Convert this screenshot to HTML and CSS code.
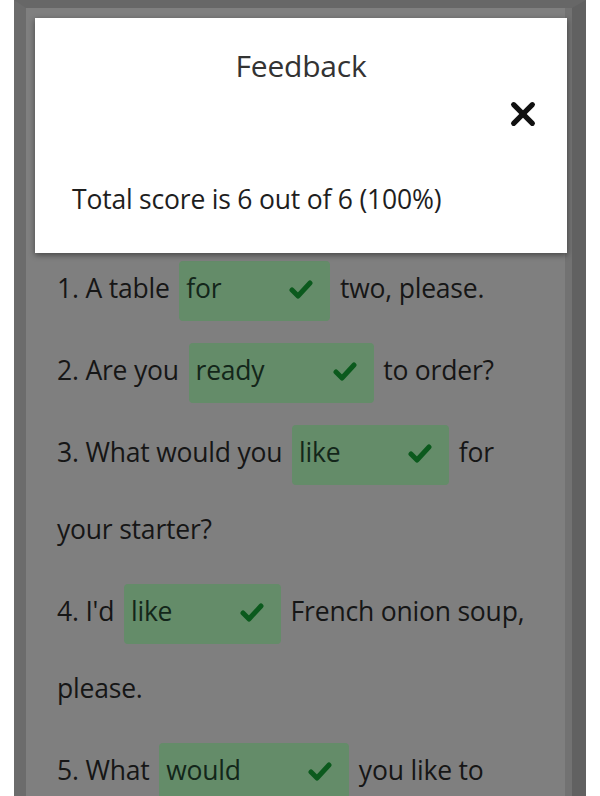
FILE: index.html
```html
<!DOCTYPE html>
<html lang="en">
<head>
    <meta charset="UTF-8">
    <meta name="viewport" content="width=device-width, initial-scale=1.0">
    <title>Restaurant Phrases</title>
    <link rel="stylesheet" href="styles.css">
</head>
<body>
    <div class="frame">
        <div class="quiz">
            <p class="item">1. A table
                <span class="answer w-for">for <svg class="tick" viewBox="0 0 24 20"><polyline points="3,10 9,16 21,3"/></svg></span>
                two, please.</p>
            <p class="item">2. Are you
                <span class="answer w-ready">ready <svg class="tick" viewBox="0 0 24 20"><polyline points="3,10 9,16 21,3"/></svg></span>
                to order?</p>
            <p class="item">3. What would you
                <span class="answer w-like">like <svg class="tick" viewBox="0 0 24 20"><polyline points="3,10 9,16 21,3"/></svg></span>
                for your starter?</p>
            <p class="item">4. I'd
                <span class="answer w-like">like <svg class="tick" viewBox="0 0 24 20"><polyline points="3,10 9,16 21,3"/></svg></span>
                French onion soup, please.</p>
            <p class="item">5. What
                <span class="answer w-would">would <svg class="tick" viewBox="0 0 24 20"><polyline points="3,10 9,16 21,3"/></svg></span>
                you like to have for your main course?</p>
        </div>

        <!-- feedback popup lies over the dimmed quiz -->
        <div class="modal">
            <h2 class="modal-title">Feedback</h2>
            <button class="close" type="button" aria-label="Close">
                <svg viewBox="0 0 24 24"><line x1="4" y1="4" x2="20" y2="20"/><line x1="20" y1="4" x2="4" y2="20"/></svg>
            </button>
            <p class="score">Total score is 6 out of 6 (100%)</p>
        </div>
    </div>
</body>
</html>
```

FILE: styles.css
```css
body {
    margin: 0;
    background-color: #fff;
    font-family: "Open Sans", "Noto Sans", sans-serif;
    overflow: hidden;
}

.frame {
    position: relative;
    margin: 0 14px;
    height: 788px;
    overflow: hidden;
    background-color: #7f7f7f;
    border-top: 8px solid #676767;
    border-left: 12px solid #6c6c6c;
    border-right: 14px solid #616161;
    box-shadow: inset -7px 0 0 #727272;
}

.quiz {
    padding: 242px 40px 0 31px;
    font-size: 26.5px;
    letter-spacing: -0.2px;
    color: #161616;
}

.item {
    margin: 0 0 5px;
    line-height: 77px;
}

.answer {
    display: inline-flex;
    align-items: center;
    justify-content: space-between;
    box-sizing: border-box;
    height: 60px;
    margin: 0 3px;
    padding: 0 17px 6px 7px;
    vertical-align: middle;
    background-color: #648c69;
    border-radius: 4px;
    color: #13261a;
    line-height: 1;
}

.w-for { width: 151px; }
.w-ready { width: 185px; }
.w-like { width: 157px; }
.w-would { width: 190px; }

.tick {
    width: 24px;
    height: 20px;
    margin-top: 4px;
}

.tick polyline {
    fill: none;
    stroke: #0b5a1d;
    stroke-width: 5;
    stroke-linecap: round;
    stroke-linejoin: round;
}

.modal {
    position: absolute;
    top: 10px;
    left: 9px;
    width: 532px;
    height: 235px;
    background-color: #fff;
    box-shadow: 0 2px 6px rgba(0, 0, 0, 0.45);
}

.modal-title {
    margin: 27px 0 0;
    text-align: center;
    font-size: 30px;
    font-weight: normal;
    letter-spacing: -0.2px;
    color: #333;
}

.close {
    position: absolute;
    top: 82px;
    right: 30px;
    width: 28px;
    height: 28px;
    padding: 0;
    border: none;
    background: none;
}

.close svg {
    width: 28px;
    height: 28px;
}

.close line {
    stroke: #111;
    stroke-width: 4.5;
    stroke-linecap: round;
}

.score {
    position: absolute;
    left: 37px;
    top: 163px;
    margin: 0;
    font-size: 26.5px;
    letter-spacing: -0.2px;
    color: #1e1e1e;
}
```
